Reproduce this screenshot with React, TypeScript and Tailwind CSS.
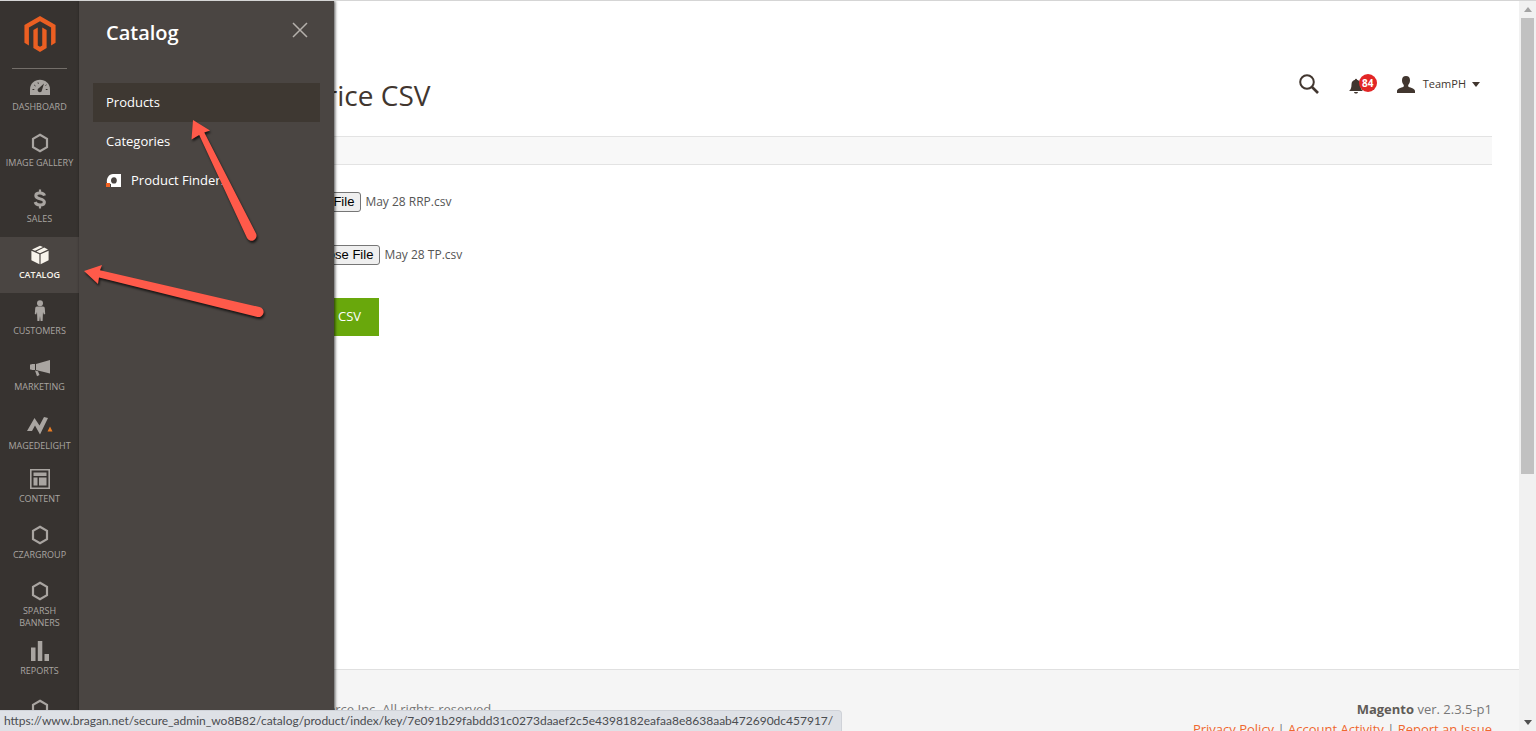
import React from 'react';
import clsx from 'clsx';

const HexIcon = () => (
    <svg width="18" height="20" viewBox="0 0 18 20" fill="none" stroke="currentColor" strokeWidth="2.200">
        <path d="M9 1.800 16 5.800v8.400l-7 4-7-4V5.800z" />
    </svg>
);

const DashboardIcon = () => (
    <svg width="20" height="16" viewBox="0 0 20 16" fill="currentColor">
        <path d="M0 16v-5.500C0 4.700 4.500.8 10 .8s10 3.900 10 9.700V16z" />
        <path d="M14 4.500 12 11a2.200 2.200 0 1 1-3-2z" fill="#373330" />
        <path d="M2.500 10.500h1.800M4.200 6l1.300 1M8 3.400l.4 1.400M15.800 10.500h1.700M15.500 6.500l1-.7" stroke="#373330" />
    </svg>
);

const DollarIcon = () => (
    <svg width="14" height="20" viewBox="0 0 14 20" fill="none" stroke="currentColor" strokeWidth="3">
        <path d="M11.500 6.600C11 4.900 9.400 4 7 4c-2.600 0-4.200.9-4.200 2.700 0 4 8.600 2.300 8.600 6.300 0 1.900-1.700 3-4.400 3-2.600 0-4.300-1.100-4.800-3" />
        <path d="M7 .5v3.500M7 16v3.500" strokeWidth="2.200" />
    </svg>
);

const CatalogIcon = () => (
    <svg width="18" height="20" viewBox="0 0 18 20" fill="currentColor">
        <path d="m9 .8 3 1.300-8 3.700L1 4.600zM13.200 2.600 17 4.500 9 8.200 5.300 6.500z" />
        <path d="M.4 5.700 8.400 9.300v10L.4 15.200zM17.600 5.700 9.600 9.300v10l8-4.100z" />
    </svg>
);

const CustomerIcon = () => (
    <svg width="12" height="22" viewBox="0 0 12 22" fill="currentColor">
        <circle cx="6" cy="3.200" r="3" />
        <path d="M3 6.500h6c1.300 0 1.700.8 1.800 2l.4 5.500-1.400.6L9 12l-.4 9H6.600L6 16l-.6 5h-2L3 12l-.8 2.600-1.400-.6.4-5.500C1.300 7.300 1.700 6.500 3 6.500z" />
    </svg>
);

const MarketingIcon = () => (
    <svg width="20" height="20" viewBox="0 0 20 20" fill="currentColor">
        <path d="M20 3v13.500L6 13V7zM0 7.500h1.500V7H5v6H1.500v-.5H0zM5 13.500l3 .8L9.500 18 7 19.200z" />
    </svg>
);

const MagedelightIcon = () => (
    <svg width="26" height="27" viewBox="0 0 26 27" fill="currentColor">
        <path d="M0 20 7.500 7l5 7.500L17 6l4 1-8 16.500-5-9L5 20z" />
        <path d="m23 15.500 2.500 5h-5z" fill="#eb7e24" />
    </svg>
);

const ContentIcon = () => (
    <svg width="20" height="20" viewBox="0 0 20 20" fill="currentColor">
        <path d="M.8.8h18.400v18.400H.8z" fill="none" stroke="currentColor" strokeWidth="1.600" />
        <path d="M3.500 3.500h13v3.500h-13zM3.500 8.500h4v8h-4zM9 8.500h7.500v8H9z" />
    </svg>
);

const ReportsIcon = () => (
    <svg width="18" height="20" viewBox="0 0 18 20" fill="currentColor">
        <path d="M0 6.500h4.500V20H0zM6.800 0h4.500v20H6.800zM13.500 13H18v7h-4.500z" />
    </svg>
);

const MagentoLogo = () => (
    <svg width="32" height="36" viewBox="0 0 32 37" fill="#eb5f22">
        <path d="M16 0 32 9.200v18.400l-4.600 2.600V11.900L16 5.300 4.600 11.900v18.300L0 27.600V9.200z" />
        <path d="M18.300 30.200 16 31.600l-2.300-1.400V11.900l-4.500 2.600v18.400L16 37l6.800-4.100V14.500l-4.500-2.600z" />
    </svg>
);

const menuItems = [
    { label: 'Dashboard', icon: DashboardIcon },
    { label: 'Image Gallery', icon: HexIcon },
    { label: 'Sales', icon: DollarIcon },
    { label: 'Catalog', icon: CatalogIcon, active: true },
    { label: 'Customers', icon: CustomerIcon },
    { label: 'Marketing', icon: MarketingIcon },
    { label: 'Magedelight', icon: MagedelightIcon },
    { label: 'Content', icon: ContentIcon },
    { label: 'Czargroup', icon: HexIcon },
    { label: 'Sparsh Banners', icon: HexIcon },
    { label: 'Reports', icon: ReportsIcon },
];

const Sidebar = () => (
    <nav className="w-[79px] shrink-0 bg-[#373330] text-[#a9a5a1]">
        <a href="#" aria-label="Magento" className="flex justify-center pt-[15px] pb-4">
            <MagentoLogo />
        </a>
        <div className="mx-3 h-px bg-[#736e69]" />
        <ul>
            {menuItems.map(({ label, icon: Icon, active }) => (
                <li key={label}>
                    <a
                        href="#"
                        className={clsx(
                            'flex min-h-14 flex-col items-center pt-1.5 pb-1 text-center text-[9px] leading-3 uppercase',
                            active && 'bg-[#4a4542] font-semibold text-[#f7f3eb]'
                        )}
                    >
                        <span className="mb-0.5 flex min-h-6 items-center">
                            <Icon />
                        </span>
                        <span className="px-0.5">{label}</span>
                    </a>
                </li>
            ))}
            <li>
                <a href="#" aria-label="Extensions" className="flex justify-center pt-2.5">
                    <HexIcon />
                </a>
            </li>
        </ul>
    </nav>
);

const CatalogMenu = () => (
    <section className="absolute inset-y-0 left-[79px] z-10 w-[255px] bg-[#4a4542] text-white shadow-[1px_0_3px_rgba(0,0,0,0.7)]">
        <div className="flex items-start justify-between pt-[18px] pr-6 pl-[27px]">
            <h2 className="text-xl leading-7 font-semibold">Catalog</h2>
            <button type="button" aria-label="Close" className="p-0.5 text-[#b5b0ab]">
                <svg width="16" height="18" viewBox="0 0 16 18" fill="none" stroke="currentColor" strokeWidth="1.500">
                    <path d="m1 2 14 14M15 2 1 16" />
                </svg>
            </button>
        </div>
        <ul className="mx-3.5 mt-9 text-[13px]">
            <li>
                <a href="#" className="flex h-[39px] items-center bg-[#3e3832] px-[13px]">Products</a>
            </li>
            <li>
                <a href="#" className="flex h-[39px] items-center px-[13px]">Categories</a>
            </li>
            <li>
                <a href="#" className="flex h-[39px] items-center gap-2.5 px-[13px]">
                    <svg width="15" height="16" viewBox="0 0 15 16">
                        <path d="M7 1h8v13H5V11L1 10C.2 5 3 1 7 1z" fill="#fff" />
                        <path d="M8 4.200c2 0 2.800 1.300 2.800 3.200S10 10.600 8 10.600 5 9.300 5 7.400s1-3.200 3-3.200z" fill="#4a4542" />
                        <path d="M0 10h4v4H0z" fill="#f26322" />
                    </svg>
                    Product Finders
                </a>
            </li>
        </ul>
    </section>
);

const FileField = ({ id, name, className }: { id: string; name: string; className: string }) => (
    <div className={clsx('flex h-5 items-center gap-1', className)}>
        <input id={id} type="file" className="sr-only" />
        <label
            htmlFor={id}
            className="rounded-[3px] border border-[#767676] bg-[#efefef] px-1.5 font-['Liberation_Sans',sans-serif] text-[13px] leading-[18px] text-black"
        >
            Choose File
        </label>
        <span className="text-xs">{name}</span>
    </div>
);

const Header = () => (
    <header className="flex items-start justify-between pt-[74px] pr-3 pl-[230px]">
        <h1 className="text-[28px] leading-10 text-[#41362f]">Price CSV</h1>
        <div className="flex h-[18px] items-center text-[#41362f]">
            <button type="button" aria-label="Search" className="mr-[30px]">
                <svg width="20" height="20" viewBox="0 0 20 20" fill="none" stroke="currentColor" strokeWidth="2">
                    <circle cx="8" cy="8" r="6.800" />
                    <path d="m13 13 6 6" strokeWidth="2.600" />
                </svg>
            </button>
            <button type="button" aria-label="Notifications" className="mr-5 flex items-end">
                <svg width="14" height="16" viewBox="0 0 14 16" fill="currentColor">
                    <path d="M6 1.800a1 1 0 0 1 2 0c2.400.6 3.500 2.400 3.500 4.700 0 3.500.8 5.200 2.500 6.500H0c1.700-1.300 2.500-3 2.500-6.500 0-2.300 1.100-4.100 3.500-4.700zM5 14h4c-.2 1-1 1.500-2 1.500S5.200 15 5 14z" />
                </svg>
                <span className="mb-0.5 -ml-1 h-[18px] w-[18px] rounded-full bg-[#e22626] text-center text-[10px] leading-[18px] font-bold text-white">84</span>
            </button>
            <button type="button" className="flex items-center text-[11px] text-[#41362f]">
                <svg width="18" height="17" viewBox="0 0 18 17" fill="currentColor" className="mr-2">
                    <path d="M9 0c2.600 0 4 1.600 4 4.200 0 2-.7 3.700-1.800 4.700v1.600c.5 1 6.800 1.500 6.800 4.500v2H0v-2c0-3 6.300-3.500 6.800-4.500V8.900C5.700 7.900 5 6.200 5 4.200 5 1.600 6.400 0 9 0z" />
                </svg>
                TeamPH
                <svg width="8" height="5" viewBox="0 0 8 5" fill="currentColor" className="ml-1.5">
                    <path d="M0 0h8L4 5z" />
                </svg>
            </button>
        </div>
    </header>
);

const Footer = () => (
    <footer className="flex shrink-0 justify-between border-t border-[#e0e0e0] bg-[#f5f5f5] pt-[29px] pr-[27px] pb-8 pl-[249px] text-[13px] leading-5 text-[#777]">
        <p>erce Inc. All rights reserved.</p>
        <div className="text-right">
            <p><strong className="font-bold text-[#5f5b57]">Magento</strong> ver. 2.3.5-p1</p>
            <p>
                <a href="#" className="text-[#ef672f]">Privacy Policy</a> | <a href="#" className="text-[#ef672f]">Account Activity</a> | <a href="#" className="text-[#ef672f]">Report an Issue</a>
            </p>
        </div>
    </footer>
);

const Scrollbar = () => (
    <div className="flex w-[17px] shrink-0 flex-col items-center justify-between bg-[#f1f1f1] py-1.5">
        <svg width="8" height="5" viewBox="0 0 8 5" fill="#a3a3a3"><path d="M0 5h8L4 0z" /></svg>
        <div className="my-1.5 w-[13px] flex-1">
            <div className="h-[65.5%] bg-[#c1c1c1]" />
        </div>
        <svg width="8" height="5" viewBox="0 0 8 5" fill="#505050"><path d="M0 0h8L4 5z" /></svg>
    </div>
);

// Red callout arrows pointing at the menu entries
const Arrows = () => (
    <svg width="200" height="220" viewBox="80 110 200 220" className="pointer-events-none absolute top-[109px] left-20 z-20 drop-shadow-[1px_2px_1px_rgba(0,0,0,0.7)]" fill="#ff5a4a">
        <path d="M193 120 210 130.500 204.300 132.500 256 233.500A5 5 0 0 1 247 238L199.200 135 191.500 139.500z" />
        <path d="M84 271 102 265 100 270.300 259.500 307A5 5 0 0 1 257.500 317L99 277.500 98 284z" />
    </svg>
);

const App = () => {
    return (
        <div className="relative flex h-screen overflow-hidden border-t border-[#d5d5d5] bg-white font-['Open_Sans',sans-serif] text-[#555]">
            <Sidebar />
            <CatalogMenu />
            <div className="flex min-w-0 flex-1 flex-col">
                <main className="min-h-[calc(100vh-63px)] shrink-0 pr-[27px]">
                    <Header />
                    <div className="mt-[21px] ml-[30px] h-[29px] border-y border-[#e3e3e3] bg-[#f8f8f8]" />
                    <form className="flex flex-col items-start">
                        <FileField id="rrp-file" name="May 28 RRP.csv" className="mt-[27px] ml-[199px]" />
                        <FileField id="tp-file" name="May 28 TP.csv" className="mt-[33px] ml-[218px]" />
                        <button type="button" className="mt-[33px] ml-[231px] h-[38px] bg-[#69a80c] pr-[18px] pl-7 text-[13px] font-medium text-white">CSV</button>
                    </form>
                </main>
                <Footer />
            </div>
            <Scrollbar />
            <Arrows />
            <div className="absolute bottom-0 left-0 z-30 rounded-tr border-t border-r border-[#cfd2d8] bg-[#dee1e6] px-1 pr-2 font-[Lato,sans-serif] text-xs leading-5 text-[#4a4c50]">
                https://www.bragan.net/secure_admin_wo8B82/catalog/product/index/key/7e091b29fabdd31c0273daaef2c5e4398182eafaa8e8638aab472690dc457917/
            </div>
        </div>
    );
};

export default App;
